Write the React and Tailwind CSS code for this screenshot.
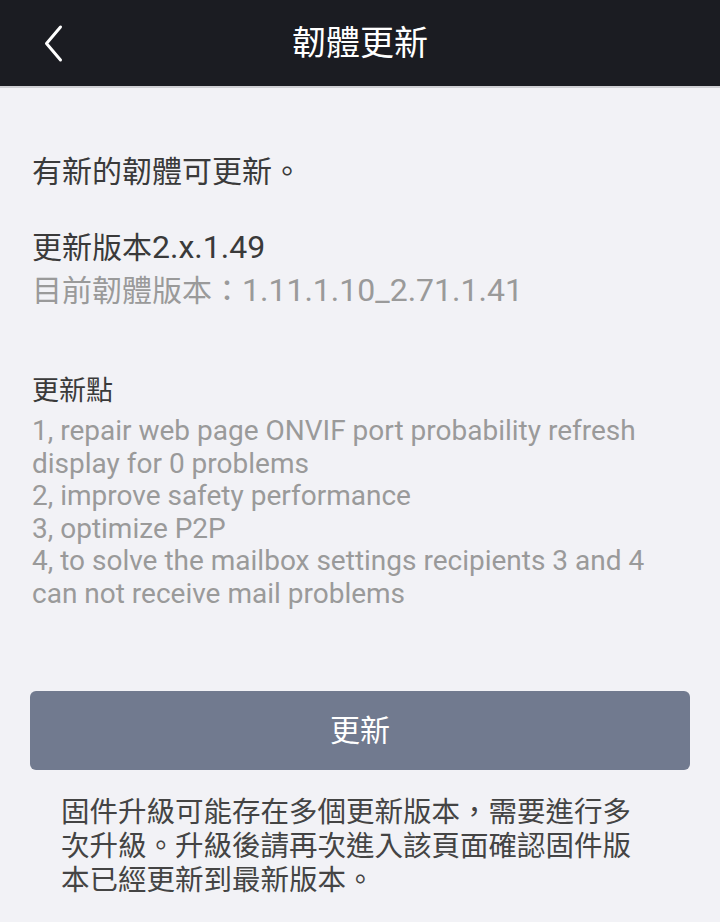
export default function App() {
  const notes = [
    '1, repair web page ONVIF port probability refresh display for 0 problems',
    '2, improve safety performance',
    '3, optimize P2P',
    '4, to solve the mailbox settings recipients 3 and 4 can not receive mail problems',
  ];

  return (
    <div
      className="min-h-[922px] w-[720px] bg-[#f2f2f6]"
      style={{ fontFamily: 'Roboto, "Noto Sans CJK TC", sans-serif' }}
    >
      {/* Header */}
      <div className="relative flex h-[88px] items-center justify-center border-b-2 border-[#d0d0d4] bg-[#1b1c22]">
        <button className="absolute left-[36px] top-[21px] flex h-[44px] w-[36px] items-center justify-center">
          <svg width="26" height="40" viewBox="0 0 26 40" fill="none">
            <path d="M19.5 4 L5.5 20.5 L19.5 37" stroke="white" strokeWidth="3" strokeLinecap="round" strokeLinejoin="round" />
          </svg>
        </button>
        <h1 className="text-[34px] font-normal text-white">韌體更新</h1>
      </div>

      {/* Body */}
      <div className="px-[32px]">
        <p className="mt-[64px] text-[30px] leading-[40px] text-[#3a3a3a]">有新的韌體可更新。</p>

        <div className="mt-[33px]">
          <p className="text-[30px] leading-[44px] text-[#3a3a3a]">
            更新版本<span className="text-[32px]">2.x.1.49</span>
          </p>
          <p className="-mt-[2px] text-[30px] leading-[44px] text-[#9a9a9a]">
            目前韌體版本：<span className="text-[32px]">1.11.1.10_2.71.1.41</span>
          </p>
        </div>

        <p className="mt-[62px] text-[27px] leading-[32px] text-[#3a3a3a]">更新點</p>
        <div className="mt-[8px] text-[28px] leading-[32.6px] text-[#9a9a9a]">
          {notes.map((n) => (
            <p key={n}>{n}</p>
          ))}
        </div>
      </div>

      {/* Update button */}
      <div className="mt-[80px] px-[30px]">
        <button className="flex h-[79px] w-full items-center justify-center rounded-[6px] bg-[#717a8f] text-[30px] text-white">
          更新
        </button>
      </div>

      <p className="ml-[61px] mt-[26px] w-[580px] text-[28.5px] leading-[34px] text-[#444444]">
        固件升級可能存在多個更新版本，需要進行多次升級。升級後請再次進入該頁面確認固件版本已經更新到最新版本。
      </p>
    </div>
  );
}
